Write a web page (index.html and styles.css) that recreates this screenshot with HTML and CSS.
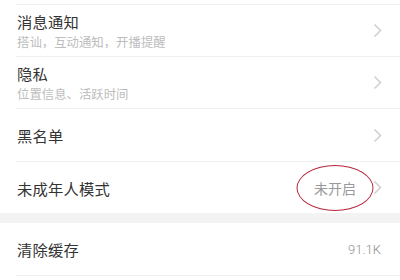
FILE: index.html
```html
<!DOCTYPE html>
<html lang="zh-CN">
<head>
<meta charset="utf-8">
<link rel="stylesheet" href="styles.css">
</head>
<body>
<div class="page">
  <div class="group">
    <div class="item two">
      <div class="text">
        <div class="title">消息通知</div>
        <div class="sub">搭讪，互动通知，开播提醒</div>
      </div>
      <svg class="chev" width="9" height="15" viewBox="0 0 9 15"><polyline points="1.5,1.5 7.5,7.5 1.5,13.5" fill="none" stroke="#cfcfcf" stroke-width="1.5"/></svg>
    </div>
    <div class="item two">
      <div class="text">
        <div class="title">隐私</div>
        <div class="sub">位置信息、活跃时间</div>
      </div>
      <svg class="chev" width="9" height="15" viewBox="0 0 9 15"><polyline points="1.5,1.5 7.5,7.5 1.5,13.5" fill="none" stroke="#cfcfcf" stroke-width="1.5"/></svg>
    </div>
    <div class="item one">
      <div class="title">黑名单</div>
      <svg class="chev" width="9" height="15" viewBox="0 0 9 15"><polyline points="1.5,1.5 7.5,7.5 1.5,13.5" fill="none" stroke="#cfcfcf" stroke-width="1.5"/></svg>
    </div>
    <div class="item one last">
      <div class="title">未成年人模式</div>
      <div class="right">
        <span class="value circled">未开启</span>
        <svg class="chev" width="9" height="15" viewBox="0 0 9 15"><polyline points="1.5,1.5 7.5,7.5 1.5,13.5" fill="none" stroke="#cfcfcf" stroke-width="1.5"/></svg>
      </div>
    </div>
  </div>
  <div class="gap"></div>
  <div class="group">
    <div class="item one cache">
      <div class="title">清除缓存</div>
      <span class="value num">91.1K</span>
    </div>
  </div>
</div>
</body>
</html>
```
FILE: styles.css
```css
html, body {
  margin: 0;
  padding: 0;
  background: #ffffff;
}
body {
  font-family: "Noto Sans CJK SC", "Noto Sans", sans-serif;
  width: 400px;
  height: 280px;
  overflow: hidden;
}
.page {
  padding-top: 4px;
}
.group {
  padding-left: 16px;
  background: #fff;
}
.item {
  display: flex;
  align-items: center;
  justify-content: space-between;
  border-top: 1px solid #efefef;
  padding-left: 1px;
  padding-right: 18px;
  box-sizing: border-box;
  height: 52px;
}
.item.one {
  height: 53px;
}
.item.last {
  height: 52px;
}
.item.cache {
  height: 53px;
  border-top: none;
  border-bottom: 1px solid #efefef;
  padding-right: 19px;
}
.text {
  display: flex;
  flex-direction: column;
}
.title {
  font-size: 15.3px;
  line-height: 20px;
  color: #333333;
  letter-spacing: 0.2px;
}
.two .title {
  margin-top: 1px;
}
.sub {
  font-size: 12.4px;
  line-height: 18px;
  color: #bdbdbd;
  margin-top: 2px;
}
.chev {
  display: block;
  flex: none;
}
.right {
  display: flex;
  align-items: center;
  gap: 17px;
}
.value {
  font-size: 14px;
  color: #9a9a9a;
}
.circled {
  position: relative;
}
.circled::after {
  content: "";
  position: absolute;
  left: 50%;
  top: 50%;
  width: 75px;
  height: 44px;
  transform: translate(-50%, -50%);
  border: 1.5px solid #b8283a;
  border-radius: 50%;
}
.num {
  font-family: "Roboto", "Noto Sans", sans-serif;
  font-size: 13px;
  font-weight: 300;
  color: #8f8f8f;
}
.gap {
  height: 10px;
  background: #f3f3f3;
}
```
